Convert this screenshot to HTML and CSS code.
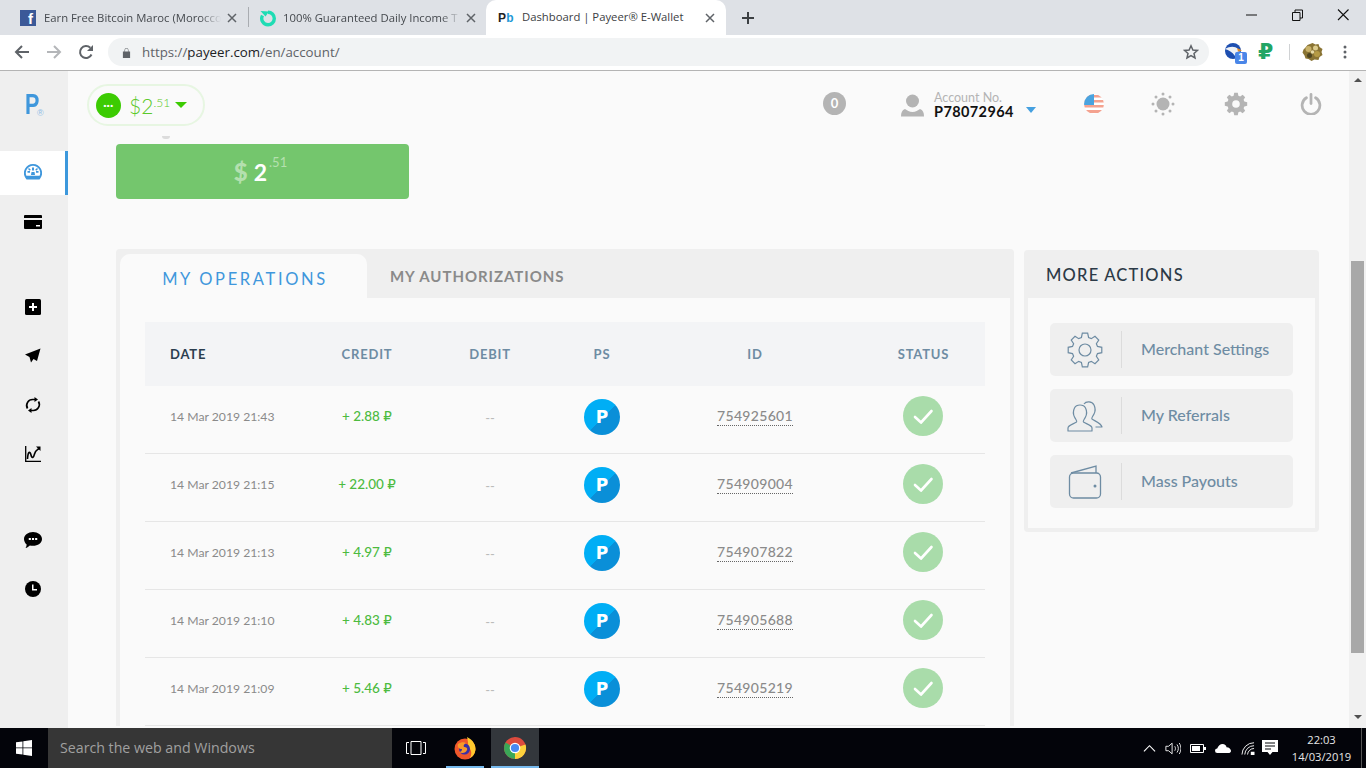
FILE: index.html
```html
<!DOCTYPE html>
<html lang="en">
<head>
<meta charset="utf-8">
<title>Dashboard | Payeer® E-Wallet</title>
<link rel="stylesheet" href="styles.css">
</head>
<body>
<svg class="defs" width="0" height="0" aria-hidden="true">
  <symbol id="gear" viewBox="-18 -18 36 36"><polygon points="-3.58,-12.5 -2.66,-16.79 2.66,-16.79 3.58,-12.5 6.31,-11.37 9.99,-13.75 13.75,-9.99 11.37,-6.31 12.5,-3.58 16.79,-2.66 16.79,2.66 12.5,3.58 11.37,6.31 13.75,9.99 9.99,13.75 6.31,11.37 3.58,12.5 2.66,16.79 -2.66,16.79 -3.58,12.5 -6.31,11.37 -9.99,13.75 -13.75,9.99 -11.37,6.31 -12.5,3.58 -16.79,2.66 -16.79,-2.66 -12.5,-3.58 -11.37,-6.31 -13.75,-9.99 -9.99,-13.75 -6.31,-11.37"/></symbol>
  <symbol id="check" viewBox="0 0 40 40"><path d="M12 21l6 5.5L28.5 15" fill="none" stroke="#fff" stroke-width="2.6" stroke-linecap="round" stroke-linejoin="round"/></symbol>
  <symbol id="x" viewBox="0 0 10 10"><path d="M1 1l8 8M9 1l-8 8" stroke="#5f6368" stroke-width="1.5" fill="none"/></symbol>
</svg>
<div class="screen">
  <div class="tabstrip">
    <div class="tab tab-one">
      <span class="fav-fb">f</span>
      <span class="tab-title fade">Earn Free Bitcoin Maroc (Morocco</span>
      <svg class="tab-x"><use href="#x"/></svg>
    </div>
    <span class="tab-sep"></span>
    <div class="tab tab-two">
      <svg class="fav" viewBox="0 0 18 18"><path d="M9 15.800A6.300 6.300 0 0 0 9 3.200" fill="none" stroke="#1fdcb4" stroke-width="3.400"/><path d="M9 15.800A6.300 6.300 0 0 1 3.500 6.500" fill="none" stroke="#1fdcb4" stroke-width="3.400"/><path d="M1.500 2l8.500.500-3.500 5z" fill="#1fdcb4"/></svg>
      <span class="tab-title fade">100% Guaranteed Daily Income T</span>
      <svg class="tab-x"><use href="#x"/></svg>
    </div>
    <div class="tab tab-active">
      <span class="fav-pb">P<b>b</b></span>
      <span class="tab-title tab-title-on">Dashboard | Payeer® E-Wallet</span>
      <svg class="tab-x"><use href="#x"/></svg>
    </div>
    <svg class="new-tab" viewBox="0 0 14 14"><path d="M7 1v12M1 7h12" stroke="#3c4043" stroke-width="2"/></svg>
    <div class="win-controls">
      <svg class="win-btn" viewBox="0 0 46 30"><path d="M18 15h11" stroke="#111" stroke-width="1"/></svg>
      <svg class="win-btn" viewBox="0 0 46 30"><path d="M18.5 12.5h7.5v8h-7.5zM21 12.5v-2.500h7.500v8H26" fill="none" stroke="#111"/></svg>
      <svg class="win-btn" viewBox="0 0 46 30"><path d="M18 9.500l10.500 10.500M28.500 9.500L18 20" stroke="#111" stroke-width="1.100"/></svg>
    </div>
  </div>

  <div class="toolbar">
    <svg class="nav-ico" viewBox="0 0 16 16"><path d="M15 8H2M8 2L2 8l6 6" fill="none" stroke="#5f6368" stroke-width="2"/></svg>
    <svg class="nav-ico" viewBox="0 0 16 16"><path d="M1 8h13M8 2l6 6-6 6" fill="none" stroke="#b4b6b9" stroke-width="2"/></svg>
    <svg class="nav-ico" viewBox="0 0 16 16"><path d="M13.500 10.500A6 6 0 1 1 12.300 3.800" fill="none" stroke="#5f6368" stroke-width="2"/><path d="M15 1v6H9z" fill="#5f6368"/></svg>
    <div class="omnibox">
      <svg class="lock" viewBox="0 0 10 12"><path d="M1 5h8v7H1zM2.800 5V3.200a2.200 2.200 0 0 1 4.400 0V5" fill="#5f6368"/><path d="M3.400 5V3.200a1.600 1.600 0 0 1 3.200 0V5z" fill="#f1f3f4"/></svg>
      <span class="url">https://<b>payeer.com</b>/en/account/</span>
      <svg class="star" viewBox="0 0 16 16"><path d="M8 1.800l1.900 4.200 4.500.4-3.400 3 1 4.500L8 11.500l-4 2.400 1-4.500-3.400-3 4.500-.4z" fill="none" stroke="#5f6368" stroke-width="1.500"/></svg>
    </div>
    <div class="ext-eagle">
      <svg viewBox="0 0 18 18" class="eagle"><circle cx="8" cy="8" r="8" fill="#1e4fb0"/><path d="M0 6c5-3 10-3 13 0l3 2-4 1-2 4C7 9 4 7 0 6z" fill="#eef1f5"/><path d="M12 5l5 2.500-4 1z" fill="#e98b1e"/></svg>
      <span class="ext-badge">1</span>
    </div>
    <span class="ext-rub">₽</span>
    <span class="ext-sep"></span>
    <svg class="ext-coin" viewBox="0 0 20 18"><path d="M10 0l3 1.500 3-.5 1 3 3 2-1 3 1 3-3 2-1 3-4-.5-3 1.500-3-2-3-.5-1-3-2-3 1-3 2-2 2-2.500z" fill="#8a7434"/><circle cx="6" cy="6" r="3" fill="#c9b26a"/><circle cx="13" cy="5" r="2.500" fill="#dccb8c"/><circle cx="14.500" cy="11" r="3" fill="#b59a45"/><circle cx="7" cy="12.500" r="2.500" fill="#4e4522"/><circle cx="10" cy="9" r="1.800" fill="#e5d9a6"/></svg>
    <svg class="kebab" viewBox="0 0 4 14"><circle cx="2" cy="2" r="1.500"/><circle cx="2" cy="7" r="1.500"/><circle cx="2" cy="12" r="1.500"/></svg>
  </div>

  <div class="viewport">
    <nav class="sidebar">
      <div class="logo"><span class="logo-p">P</span><small>®</small></div>
      <a class="side-item side-active">
        <svg class="side-ico" viewBox="0 0 18 16"><path d="M9 0a9 9 0 0 0-7.500 14l1 1.500h13l1-1.500A9 9 0 0 0 9 0z" fill="#3f97dc"/><path d="M9 1.800a7.200 7.200 0 0 0-6.600 10h13.200A7.200 7.200 0 0 0 9 1.800z" fill="#fff"/><path d="M8 3.500h2v3H8zM3.500 7h2.500v1.800H3.500zM12 7h2.500v1.800H12zM5 4l1.800 1.800-1 1L4 5zM13 4l1 1-1.800 1.800-1-1zM7.500 8h3l.5 3H7z" fill="#3f97dc"/></svg>
      </a>
      <a class="side-item">
        <svg class="side-ico" viewBox="0 0 18 14"><path d="M0 1a1 1 0 0 1 1-1h16a1 1 0 0 1 1 1v2H0zM0 5h18v8a1 1 0 0 1-1 1H1a1 1 0 0 1-1-1z"/><path d="M12 10h4v1.500h-4z" fill="#fff"/></svg>
      </a>
      <a class="side-item side-gap-b">
        <svg class="side-ico side-ico-sm" viewBox="0 0 16 16"><rect width="16" height="16" rx="1.500"/><path d="M7 4h2v3h3v2H9v3H7V9H4V7h3z" fill="#fff"/></svg>
      </a>
      <a class="side-item">
        <svg class="side-ico" viewBox="0 0 16 16"><path d="M15.500 .5L0 6.500l4.500 2.500 1.500 5.500 2.500-3.500 3.500 2z"/></svg>
      </a>
      <a class="side-item">
        <svg class="side-ico" viewBox="0 0 16 16"><path d="M2.500 11.500A6 6 0 0 1 8 2.500h2M13.500 4.500A6 6 0 0 1 8 13.500H6" fill="none" stroke="#000" stroke-width="1.700"/><path d="M9.500 0l3.500 2.500-3.500 2.500zM6.500 11L3 13.500 6.500 16z"/></svg>
      </a>
      <a class="side-item">
        <svg class="side-ico" viewBox="0 0 16 16"><path d="M.7 0v15.300H16" fill="none" stroke="#000" stroke-width="1.300"/><path d="M2.500 13C3 5 5 5 6 9s2.500 3 3.500-1S12 4 14 2.500" fill="none" stroke="#000" stroke-width="1.600"/><path d="M11 .5H15.500V5z"/></svg>
      </a>
      <a class="side-item side-gap-c">
        <svg class="side-ico" viewBox="0 0 17 15"><path d="M8.500 0C13 0 17 2.800 17 6.500S13 13 8.500 13c-1.200 0-2.200-.2-3-.4C4.500 13.600 3 14.700 1.500 15c.7-1 1-2.200 1-3.300C1 10.500 0 8.600 0 6.500 0 2.800 4 0 8.500 0z"/><path d="M4.500 5.500h2v2h-2zM7.500 5.500h2v2h-2zM10.500 5.500h2v2h-2z" fill="#fff"/></svg>
      </a>
      <a class="side-item">
        <svg class="side-ico" viewBox="0 0 16 16"><circle cx="8" cy="8" r="8"/><path d="M7 3.500h1.500V8H12v1.500H7z" fill="#fff"/></svg>
      </a>
    </nav>

    <main class="page">
      <header class="topbar">
        <div class="pill">
          <span class="pill-dot">•••</span>
          <span class="pill-amt">$2<sup>.51</sup></span>
          <span class="caret caret-green"></span>
        </div>
        <div class="top-right">
          <span class="msg-badge">0</span>
          <svg class="user-ico" viewBox="0 0 23 23"><circle cx="11.500" cy="7" r="6.500" fill="#b4b4b4"/><path d="M0 22.500c0-4 1-6.500 4-7.500 2 1.500 4.500 3 7.500 3s5.500-1.500 7.500-3c3 1 4 3.500 4 7.500z" fill="#b4b4b4"/></svg>
          <div class="acct">
            <span class="acct-label">Account No.</span>
            <span class="acct-num">P78072964</span>
          </div>
          <span class="caret caret-blue"></span>
          <svg class="flag" viewBox="0 0 20 20"><defs><clipPath id="fc"><circle cx="10" cy="10" r="10"/></clipPath></defs><g clip-path="url(#fc)"><rect width="20" height="20" fill="#fff"/><path d="M0 1h20v2.500H0zM0 6h20v2.500H0zM0 11h20v2.500H0zM0 16h20v3H0z" fill="#f4a28f"/><rect width="10" height="11" fill="#4aa3df"/></g></svg>
          <svg class="sun" viewBox="0 0 24 24"><circle cx="12" cy="12" r="6.500" fill="#b4b4b4"/><g fill="#b4b4b4"><circle cx="12" cy="2" r="1.500"/><circle cx="12" cy="22" r="1.500"/><circle cx="2" cy="12" r="1.500"/><circle cx="22" cy="12" r="1.500"/><circle cx="5" cy="5" r="1.500"/><circle cx="19" cy="5" r="1.500"/><circle cx="5" cy="19" r="1.500"/><circle cx="19" cy="19" r="1.500"/></g></svg>
          <svg class="top-gear" viewBox="0 0 24 24"><use href="#gear" width="24" height="24" fill="#b4b4b4"/><circle cx="12" cy="12" r="3.800" fill="#fafafa"/></svg>
          <svg class="power" viewBox="0 0 24 24"><path d="M7 5.200a9.700 9.700 0 1 0 10 0" fill="none" stroke="#b4b4b4" stroke-width="3" stroke-linecap="round"/><path d="M12 1.500v10" stroke="#b4b4b4" stroke-width="3" stroke-linecap="round"/></svg>
        </div>
      </header>

      <div class="content">
        <span class="peek"></span>
        <div class="balance"><span class="bal-cur">$</span><span class="bal-int">2</span><sup class="bal-dec">.51</sup></div>

        <div class="columns">
          <section class="ops">
            <div class="ops-tabs">
              <div class="ops-tab-on">MY OPERATIONS</div>
              <div class="ops-tab-off">MY AUTHORIZATIONS</div>
            </div>
            <div class="ops-body">
              <div class="row row-head">
                <span class="c-date th-dark">DATE</span><span class="c">CREDIT</span><span class="c">DEBIT</span><span class="c">PS</span><span class="c">ID</span><span class="c">STATUS</span>
              </div>
              <div class="row">
                <span class="c-date">14 Mar 2019 21:43</span><span class="c credit">+ 2.88 ₽</span><span class="c debit">--</span><span class="c"><span class="ps">P</span></span><span class="c"><span class="opid">754925601</span></span><span class="c"><svg class="ok"><use href="#check"/></svg></span>
              </div>
              <div class="row">
                <span class="c-date">14 Mar 2019 21:15</span><span class="c credit">+ 22.00 ₽</span><span class="c debit">--</span><span class="c"><span class="ps">P</span></span><span class="c"><span class="opid">754909004</span></span><span class="c"><svg class="ok"><use href="#check"/></svg></span>
              </div>
              <div class="row">
                <span class="c-date">14 Mar 2019 21:13</span><span class="c credit">+ 4.97 ₽</span><span class="c debit">--</span><span class="c"><span class="ps">P</span></span><span class="c"><span class="opid">754907822</span></span><span class="c"><svg class="ok"><use href="#check"/></svg></span>
              </div>
              <div class="row">
                <span class="c-date">14 Mar 2019 21:10</span><span class="c credit">+ 4.83 ₽</span><span class="c debit">--</span><span class="c"><span class="ps">P</span></span><span class="c"><span class="opid">754905688</span></span><span class="c"><svg class="ok"><use href="#check"/></svg></span>
              </div>
              <div class="row">
                <span class="c-date">14 Mar 2019 21:09</span><span class="c credit">+ 5.46 ₽</span><span class="c debit">--</span><span class="c"><span class="ps">P</span></span><span class="c"><span class="opid">754905219</span></span><span class="c"><svg class="ok"><use href="#check"/></svg></span>
              </div>
            </div>
          </section>

          <aside class="more">
            <h2 class="more-title">MORE ACTIONS</h2>
            <div class="more-body">
              <a class="action">
                <span class="action-ico"><svg class="a-svg" viewBox="-18 -18 36 36"><use href="#gear" x="-18" y="-18" width="36" height="36" fill="none" stroke="#6e8ca3" stroke-width="1.200"/><circle r="6" fill="none" stroke="#6e8ca3" stroke-width="1.200"/></svg></span>
                <span class="action-label">Merchant Settings</span>
              </a>
              <a class="action">
                <span class="action-ico"><svg class="a-svg" viewBox="0 0 36 32"><path d="M1 31v-3c0-3 6-4 8.500-6 1-1-.5-2-2-5-1.500-3-1.500-6 0-9 2-4 9-4 11 0 1.500 3 1.500 6 0 9-1.500 3-3 4-2 5 2.500 2 8.500 3 8.500 6v3z" fill="none" stroke="#6e8ca3" stroke-width="1.200" stroke-linejoin="round"/><path d="M17 4c2-3 8-3 10 1 1.500 3 1.500 6 0 9-1.500 3-3 4-2 5 2.500 2 9 4 10 8h-6.500" fill="none" stroke="#6e8ca3" stroke-width="1.200" stroke-linejoin="round"/></svg></span>
                <span class="action-label">My Referrals</span>
              </a>
              <a class="action">
                <span class="action-ico"><svg class="a-svg" viewBox="0 0 36 36"><path d="M4 9l25-7v7" fill="none" stroke="#6e8ca3" stroke-width="1.300"/><rect x="2.500" y="9" width="31" height="25" rx="4" fill="none" stroke="#6e8ca3" stroke-width="1.300"/><circle cx="28" cy="22" r="1.500" fill="#6e8ca3"/></svg></span>
                <span class="action-label">Mass Payouts</span>
              </a>
            </div>
          </aside>
        </div>
      </div>
    </main>

    <div class="scrollbar">
      <span class="sb-up"></span>
      <span class="sb-thumb"></span>
      <span class="sb-down"></span>
    </div>
  </div>

  <footer class="taskbar">
    <span class="start">
      <svg class="winlogo" viewBox="0 0 16 16"><path d="M0 2.300L6.500 1.400V7.500H0zM7.300 1.300L16 0V7.500H7.300zM0 8.300H6.500V14.500L0 13.700zM7.300 8.300H16V16L7.300 14.800z" fill="#fff"/></svg>
    </span>
    <div class="search">Search the web and Windows</div>
    <span class="tb-btn tb-view"><svg class="tv" viewBox="0 0 20 14"><path d="M5 .5h10v13H5z" fill="none" stroke="#fff"/><path d="M3 1.500H.5v11H3M17 1.500h2.500v11H17" fill="none" stroke="#fff"/></svg></span>
    <span class="tb-btn tb-fx">
      <svg class="tb-app" viewBox="0 0 24 24"><circle cx="12" cy="13" r="10.500" fill="#f0572b"/><path d="M14 1c6 3 9 8 8.500 13-.5 4-3 7-6 8.500 3-4 2-9-1-11C15 8 15 4 14 1z" fill="#ffc92e"/><circle cx="11.500" cy="13" r="5.500" fill="#3a2fa8"/><path d="M5 8c3-2 6-2 8-1-2 1-3 3-2 4 2 0 4 1 3 3-1 3-5 4-8 2 2 0 3-1 3-3-3 0-5-2-4-5z" fill="#f79a2a"/></svg>
      <i class="tb-line tb-line-fx"></i>
    </span>
    <span class="tb-btn tb-ch">
      <svg class="tb-app" viewBox="0 0 24 24"><circle cx="12" cy="12" r="11" fill="#dd4b3e"/><path d="M12 12L22.500 8.500A11 11 0 0 1 12 23z" fill="#fdd13c"/><path d="M12 12L12 23A11 11 0 0 1 2.500 6.500z" fill="#3aa757"/><circle cx="12" cy="12" r="5.300" fill="#fff"/><circle cx="12" cy="12" r="4.100" fill="#4a89f3"/></svg>
      <i class="tb-line"></i>
    </span>
    <div class="tray">
      <svg class="tray-ico tray-chev" viewBox="0 0 14 8"><path d="M1 7l6-6 6 6" fill="none" stroke="#fff" stroke-width="1.200"/></svg>
      <svg class="tray-ico" viewBox="0 0 18 14"><path d="M1 4.500h3L8 1v12L4 9.500H1zM11 4.500c1 1.500 1 3.500 0 5M13.500 2.500c2 3 2 6 0 9M16 .8c2.500 4 2.500 8.400 0 12.400" fill="none" stroke="#fff"/></svg>
      <svg class="tray-ico" viewBox="0 0 16 10"><path d="M.5 1h13v8H.5z" fill="none" stroke="#fff"/><path d="M2 2.500h8v5H2zM14 3.500h2v3h-2z" fill="#fff"/></svg>
      <svg class="tray-ico" viewBox="0 0 18 10"><path d="M2.500 10a2.500 2.500 0 0 1 0-5C3.500 2 6 0 8.500 0c2.500 0 4 1.500 4.500 3.500 3 0 5 2.500 5 4s-1 2.500-2 2.500z" fill="#fff"/></svg>
      <svg class="tray-ico" viewBox="0 0 14 14"><path d="M.5 13.500A13 13 0 0 1 13.500.8M3.500 13.500A10 10 0 0 1 13.500 4M6.500 13.500A7 7 0 0 1 13.500 7" fill="none" stroke="#fff"/><path d="M10 10.500h4v3.500h-4z" fill="#fff"/></svg>
      <svg class="tray-note" viewBox="0 0 16 16"><path d="M0 0h16v12h-5.500L8 15 5.500 12H0z" fill="#fff"/><path d="M3 3h10M3 6h10M3 9h6" stroke="#05060a"/></svg>
      <div class="clock"><span>22:03</span><span>14/03/2019</span></div>
      <span class="show-desk"></span>
    </div>
  </footer>
</div>
</body>
</html>
```

FILE: styles.css
```css
* { box-sizing: border-box; }
html, body { margin: 0; padding: 0; height: 100%; overflow: hidden; }
body { font-family: Lato, "DejaVu Sans", sans-serif; color: #333; }
.defs { display: block; height: 0; }
.screen { width: 1366px; height: 768px; display: flex; flex-direction: column; overflow: hidden; }

/* browser tab strip */
.tabstrip { height: 35px; flex: none; display: flex; align-items: flex-end; background: #dee1e6; font-family: "Open Sans", "Noto Sans", sans-serif; font-size: 11.300px; color: #45494e; }
.tab { height: 35px; display: flex; align-items: center; flex: none; }
.tab-one { width: 228px; margin-left: 20px; }
.tab-sep { width: 1px; height: 20px; background: #a9acb1; margin: 0 10px 8px 0; flex: none; }
.tab-two { width: 227px; }
.fav-fb { width: 16px; height: 16px; background: #3b5998; color: #fff; font: bold 15px/18px "Liberation Sans", sans-serif; text-align: right; padding-right: 3px; flex: none; overflow: hidden; }
.fav { width: 18px; height: 18px; flex: none; }
.tab-title { white-space: nowrap; overflow: hidden; padding-bottom: 1px; }
.tab-one .tab-title { width: 177px; margin-left: 8px; }
.tab-two .tab-title { width: 179px; margin-left: 6px; }
.fade { -webkit-mask-image: linear-gradient(to right, #000 88%, transparent 100%); mask-image: linear-gradient(to right, #000 88%, transparent 100%); }
.tab-x { width: 10px; height: 10px; margin-left: 6px; flex: none; }
.tab-two .tab-x { margin-left: 4px; }
.tab-active { width: 240px; margin-left: 0; background: #fff; border-radius: 10px 10px 0 0; padding-left: 12px; color: #3c4043; }
.tab-active .tab-title { width: 177px; margin-left: 6px; }
.tab-title-on { line-height: 18px; }
.fav-pb { width: 18px; font: bold 12px "Liberation Sans", sans-serif; color: #222; letter-spacing: .3px; flex: none; }
.fav-pb b { color: #1f9ad6; }
.new-tab { width: 14px; height: 14px; margin: 0 0 10px 15px; flex: none; }
.win-controls { margin-left: auto; display: flex; height: 35px; align-self: flex-start; }
.win-btn { width: 46px; height: 30px; display: block; }

/* toolbar */
.toolbar { height: 36px; flex: none; display: flex; align-items: center; background: #fff; border-bottom: 1px solid #b4b4b4; padding-bottom: 1px; padding-left: 14px; }
.nav-ico { width: 16px; height: 16px; margin-right: 16px; flex: none; }
.omnibox { width: 1101px; height: 28px; margin-left: -2px; border-radius: 14px; background: #f1f3f4; display: flex; align-items: center; padding-left: 14px; flex: none; }
.lock { width: 9px; height: 11px; flex: none; }
.url { margin-left: 11px; font: 13.300px "Open Sans", "Noto Sans", sans-serif; color: #5f6368; }
.url b { font-weight: 400; color: #202124; }
.star { width: 16px; height: 16px; margin-left: auto; margin-right: 10px; }
.ext-eagle { width: 18px; height: 18px; margin-left: 16px; position: relative; flex: none; }
.eagle { width: 18px; height: 18px; display: block; }
.ext-badge { position: absolute; left: 10px; top: 9px; width: 12px; height: 12px; border-radius: 2px; background: #4a86e8; color: #fff; font: bold 10px/12px "Liberation Sans", sans-serif; text-align: center; }
.ext-rub { margin-left: 15px; width: 16px; font: bold 22px/22px "DejaVu Sans", sans-serif; color: #22a565; flex: none; }
.ext-sep { width: 1px; height: 16px; background: #d0d2d4; margin-left: 15px; flex: none; }
.ext-coin { width: 21px; height: 18px; margin-left: 12px; flex: none; }
.kebab { width: 4px; height: 14px; margin-left: 20px; fill: #5f6368; flex: none; }

/* viewport */
.viewport { height: 657px; flex: none; display: flex; overflow: hidden; }
.sidebar { width: 68px; flex: none; background: #efefef; display: flex; flex-direction: column; }
.logo { height: 80px; padding: 17px 0 0 25px; font: bold 30px/32px "Liberation Sans", sans-serif; color: #3f97dc; white-space: nowrap; }
.logo-p { display: inline-block; transform: scaleX(.72); transform-origin: left center; }
.logo small { font-size: 9px; font-weight: 400; color: #8fbde6; margin-left: -8px; vertical-align: -2px; }
.side-item { height: 49px; flex: none; display: flex; align-items: center; justify-content: center; padding: 0 2px 2px 0; }
.side-active { height: 44px; background: #fff; border-right: 3px solid #3c98dc; margin-bottom: 3px; padding: 0 0 2px; }
.side-gap-b { margin-top: 36px; }
.side-gap-c { margin-top: 37px; }
.side-ico { width: 18px; height: 16px; display: block; fill: #000; }
.side-ico-sm { width: 16px; height: 16px; }

.page { flex: 1; min-width: 0; background: #fafafa; overflow: hidden; }
.topbar { height: 65px; padding: 13px 27px 0 19px; display: flex; align-items: flex-start; }
.pill { width: 118px; height: 42px; border: 2px solid #e7f6e2; border-radius: 21px; display: flex; align-items: center; padding-left: 7px; flex: none; }
.pill-dot { width: 25px; height: 25px; border-radius: 50%; background: #3ccb02; color: #fff; font: bold 8px/25px "Liberation Sans", sans-serif; letter-spacing: .5px; text-align: center; flex: none; }
.pill-amt { margin-left: 8px; font-size: 21px; font-weight: 300; color: #5cc92b; }
.pill-amt sup { font-size: 12px; font-weight: 300; line-height: 0; vertical-align: 7px; }
.caret { width: 0; height: 0; border-style: solid; border-width: 7px 6px 0; flex: none; border-color: transparent; }
.caret-green { border-width: 6px 6px 0; border-top-color: #3ccb02; margin-left: 5px; }
.caret-blue { border-width: 6px 5.500px 0; border-top-color: #45a0e0; margin: 12px 0 0 9px; }
.top-right { margin-left: auto; margin-top: 1px; display: flex; align-items: center; height: 38px; }
.msg-badge { width: 23px; height: 23px; border-radius: 50%; background: #b4b4b4; color: #fff; font: bold 13px/23px Lato, sans-serif; text-align: center; flex: none; margin-top: -1px; }
.user-ico { width: 23px; height: 23px; margin: 2px 0 0 55px; flex: none; }
.acct { width: 83px; margin-left: 10px; display: flex; flex-direction: column; flex: none; }
.acct-label { font-size: 12.500px; line-height: 12px; color: #b4b4b4; margin-top: 2px; }
.acct-num { font-size: 14.500px; line-height: 15px; font-weight: 700; color: #111; letter-spacing: .4px; white-space: nowrap; }
.flag { width: 20px; height: 20px; margin-left: 48px; flex: none; }
.sun { width: 24px; height: 24px; margin-left: 47px; flex: none; }
.top-gear { width: 24px; height: 24px; margin-left: 49px; flex: none; }
.power { width: 22px; height: 22px; margin-left: 52px; flex: none; }

.content { padding: 8px 30px 0 48px; position: relative; }
.peek { position: absolute; left: 46px; top: 0; width: 8px; height: 3px; background: #dcdcdc; border-radius: 0 0 4px 4px; margin-left: 48px; }
.balance { width: 293px; height: 55px; padding-right: 4px; background: #74c66d; border-radius: 4px; display: flex; align-items: center; justify-content: center; color: #fff; }
.bal-cur { font-size: 24px; font-weight: 900; color: #b4e0af; margin-right: 6px; }
.bal-int { font-size: 23px; font-weight: 700; }
.bal-dec { font-size: 13px; color: #b4e0af; margin: -18px 0 0 2px; line-height: 1; }

.columns { display: flex; align-items: flex-start; gap: 10px; margin-top: 50px; }
.ops { width: 898px; flex: none; background: #efefef; border-radius: 4px 4px 0 0; padding: 5px 4px 0; }
.ops-tabs { display: flex; height: 44px; }
.ops-tab-on { width: 247px; background: #fafafa; border-radius: 10px 10px 0 0; font-family: Lato, sans-serif; font-size: 16.500px; letter-spacing: 2.650px; color: #3f97dc; text-align: center; padding: 15px 0 0 3px; line-height: 20px; }
.ops-tab-off { padding: 12px 0 0 23px; font-size: 15px; font-weight: 700; letter-spacing: .95px; color: #8a8a8a; line-height: 20px; }
.ops-body { background: #fafafa; padding: 24px 25px 0; }
.row { display: grid; grid-template-columns: 165px 114px 132px 92px 214px 123px; height: 68px; padding-bottom: 6px; align-items: center; border-bottom: 1px solid #e6e6e6; }
.row-head { height: 64px; padding-bottom: 0; background: #f3f4f6; border-bottom: 0; font-size: 13px; font-weight: 700; letter-spacing: .8px; color: #6e8ca3; }
.c { text-align: center; display: flex; justify-content: center; align-items: center; }
.c-date { padding-left: 25px; font-size: 12.200px; color: #8a8a8a; white-space: nowrap; }
.row-head .th-dark { font-size: 13px; color: #2c3e4f; }
.credit { font-size: 13.500px; font-weight: 500; color: #4cbb3f; margin-top: -1px; white-space: nowrap; }
.debit { font-size: 13px; color: #bbb; margin-top: 2px; }
.ps { width: 36px; height: 36px; border-radius: 50%; background: linear-gradient(135deg, #00aef5 52%, #0a8fd8 52%); color: #fff; font: bold 17px/36px "DejaVu Sans", sans-serif; text-align: center; }
.opid { font-size: 14px; font-weight: 500; letter-spacing: .3px; color: #8a8a8a; border-bottom: 1px dotted #666; line-height: 16px; padding-bottom: 1px; }
.ok { width: 40px; height: 40px; border-radius: 50%; background: #a9dcaa; display: block; margin: -2px 2px 0 0; }

.more { width: 295px; flex: none; background: #efefef; border-radius: 4px; padding: 0 4px 4px; margin-top: 1px; }
.more-title { margin: 0; height: 48px; padding-left: 18px; font-size: 16.500px; line-height: 51px; font-weight: 500; letter-spacing: 1.200px; color: #2c3a47; }
.more-body { background: #fafafa; padding: 25px 22px 20px; height: 230px; display: flex; flex-direction: column; gap: 13px; }
.action { width: 243px; height: 53px; flex: none; background: #efefef; border-radius: 5px; display: flex; align-items: center; }
.action-ico { width: 72px; height: 37px; border-right: 1px solid #dcdcdc; display: flex; align-items: center; justify-content: center; padding-right: 1px; flex: none; }
.a-svg { width: 36px; height: 36px; display: block; overflow: visible; }
.action-label { margin: -2px 0 0 19px; font-size: 16px; font-weight: 500; color: #6e8ca3; white-space: nowrap; }

.scrollbar { width: 17px; flex: none; background: #f1f1f1; display: flex; flex-direction: column; align-items: center; }
.sb-up { width: 0; height: 0; border: solid transparent; border-width: 0 4px 4px; border-bottom-color: #505050; margin-top: 7px; flex: none; }
.sb-thumb { width: 13px; height: 392px; background: #a8a8a8; margin-top: 179px; flex: none; }
.sb-down { width: 0; height: 0; border: solid transparent; border-width: 4px 4px 0; border-top-color: #505050; margin-top: 62px; flex: none; }

/* taskbar */
.taskbar { height: 40px; flex: none; background: #03040a; display: flex; align-items: stretch; color: #fff; font-family: "Open Sans", "Noto Sans", sans-serif; }
.start { width: 48px; display: flex; align-items: center; justify-content: center; flex: none; }
.winlogo { width: 16px; height: 16px; }
.search { width: 344px; background: #363636; color: #a0a0a0; font-size: 14.200px; line-height: 40px; padding-left: 12px; flex: none; }
.tb-btn { width: 48px; display: flex; align-items: center; justify-content: center; position: relative; flex: none; }
.tb-view { width: 48px; }
.tv { width: 20px; height: 14px; }
.tb-fx { margin-left: 1px; margin-right: 2px; }
.tb-ch { background: #33373c; }
.tb-app { width: 24px; height: 24px; }
.tb-line { position: absolute; left: 0; right: 0; bottom: 0; height: 2px; background: #76b9ed; }
.tb-line-fx { left: 5px; right: 5px; }
.tray { margin-left: auto; display: flex; align-items: center; }
.tray-ico { width: 16px; height: 13px; margin-right: 9px; flex: none; }
.tray-chev { width: 13px; margin-right: 9px; }
.tray-note { width: 16px; height: 16px; margin-left: -3px; flex: none; }
.clock { width: 73px; margin-left: 7px; display: flex; flex-direction: column; align-items: center; font-size: 11.200px; line-height: 17px; color: #e6e6e6; }
.show-desk { width: 1px; height: 40px; background: #555; margin-left: 3px; margin-right: 4px; }
```
